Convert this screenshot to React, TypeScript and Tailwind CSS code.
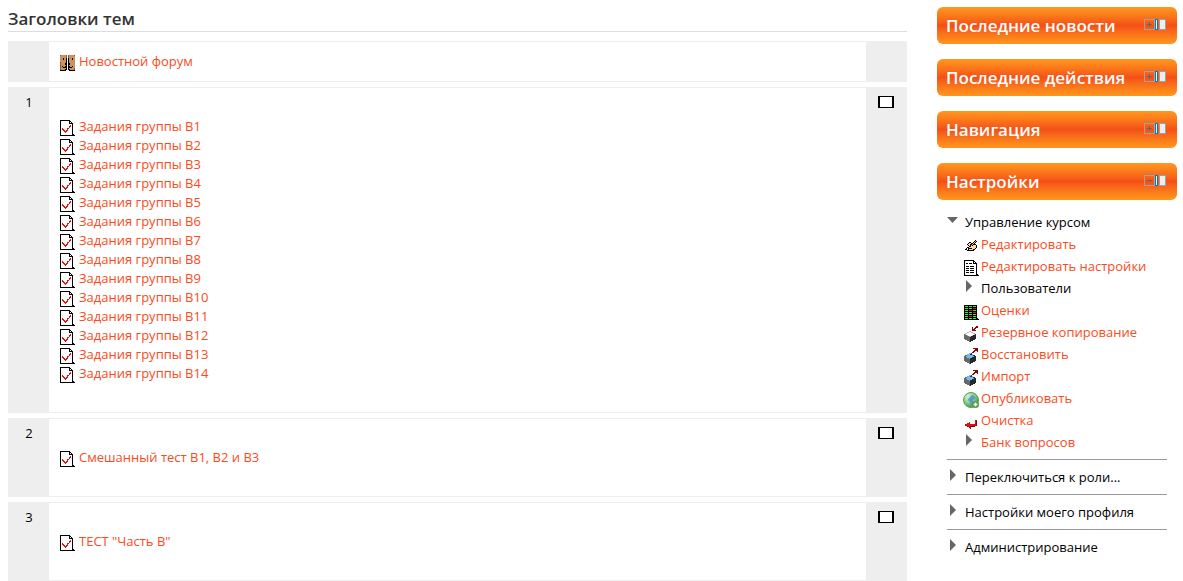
import { FC, ReactNode } from "react"

interface IPixelIcon {
    rows: string[]
}

interface ITreeItem {
    label: string
    icon?: ReactNode
    plain?: boolean
}

interface ITopic {
    num?: string
    items: string[]
}

const palette: Record<string, string> = {
    k: "#000000",
    w: "#ffffff",
    r: "#e01010",
    d: "#7a0a10",
    g: "#3fe04a",
    t: "#c8935c",
    s: "#8a5f38",
    p: "#ffd9a0",
    y: "#f0c020",
    a: "#686868",
    b: "#68c0f8",
    n: "#282828",
    e: "#b8b8b8",
}

const PixelIcon: FC<IPixelIcon> = ({ rows }) => {
    return (
        <svg className="block h-4 w-4 shrink-0" viewBox="0 0 16 16" shapeRendering="crispEdges" aria-hidden="true">
            {rows.map((row, y) =>
                row.split("").map((c, x) =>
                    palette[c] ? <rect key={`${x}-${y}`} x={x} y={y} width="1" height="1" fill={palette[c]} /> : null
                )
            )}
        </svg>
    )
}

const quiz = [
    "kkkkkkkkkk......",
    "kwwwwwwwwkk.....",
    "kwwwwwwwwkwk....",
    "kwwwwwwwwkkkk...",
    "kwwwwwwwwwwwk...",
    "kwwwwwwwwwrwk...",
    "kwwwwwwwwrrwk...",
    "kwwwwwwwwrwwk...",
    "kwrwwwwrrwwwk...",
    "kwrrwwwrwwwwk...",
    "kwwrrwrrwwwwk...",
    "kwwwrrrwwwwwk...",
    "kwwwwrwwwwwwk...",
    "kwwwwwwwwwwwk...",
    "kwwwwwwwwwwwkk..",
    "kkkkkkkkkkkkkkk.",
]

const forum = [
    "sttttts.sttttts.",
    "tttttts.stttttt.",
    "tttttts.stttttt.",
    "tttkttk.ktttktt.",
    "tttkttk.ktttktt.",
    "ttttttk.ktttttt.",
    "ttttttk.ktttttt.",
    "stttttk.ktttttt.",
    "sttttkk.kkttttt.",
    "sttttkk.kkttttt.",
    "stttttk.ktttttt.",
    "stkttkk.kkttktt.",
    "sttkkkk.kkkkttt.",
    "stttttk.kttttts.",
    "sttttkk.kktttts.",
    "kkkkkk...kkkkkk.",
]

const edit = [
    "................",
    "................",
    "............k...",
    "...........kyk..",
    "......kk..kyk...",
    ".....kppkkyk....",
    "....kppkkykkk...",
    ".....kpkykpppk..",
    "......kkpppppk..",
    "....kkpppppppk..",
    "...kwkkkkpppk...",
    "..kkwkppppkk....",
    "....kkkkkkk.....",
]

const report = [
    ".kkkkkkkkkk.....",
    ".kwwwwwwwwkk....",
    ".kwwwwwwwwkwk...",
    ".kwkkwkkkwkkkk..",
    ".kwwwwwwwwwwwk..",
    ".kwwwwwwwwwwwk..",
    ".kwkkkwkkkkwwk..",
    ".kwwwwwwwwwwwk..",
    ".kwkkkwkkkkwwk..",
    ".kwwwwwwwwwwwk..",
    ".kwkkkwkkkkwwk..",
    ".kwwwwwwwwwwwk..",
    ".kwkkkwkkkkwwk..",
    ".kwwwwwwwwwwwk..",
    ".kwwwwwwwwwwwkk.",
    ".kkkkkkkkkkkkkkk",
]

const grades = [
    "................",
    ".kkkkkkkkkkkkk..",
    ".kgggkgggkgggk..",
    ".kkkkkkkkkkkkk..",
    ".kgggkgggkrrrk..",
    ".kkkkkkkkkkkkk..",
    ".kgggkrrrkgggk..",
    ".kkkkkkkkkkkkk..",
    ".kgggkgggkrrrk..",
    ".kkkkkkkkkkkkk..",
    ".kgggkgggkgggk..",
    ".kkkkkkkkkkkkk..",
    ".kgggkrrrkgggk..",
    ".kkkkkkkkkkkkk..",
    ".kgggkgggkgggkk.",
    ".kkkkkkkkkkkkkkk",
]

const backup = [
    ".............dd.",
    ".........d..ddd.",
    ".........d.dd...",
    ".........ddd....",
    ".........dddd...",
    "......ee........",
    "....eewwee......",
    "..eewwwwwwee....",
    ".aewwwwwwwwen...",
    ".aaaewwwwennn...",
    ".aaaaaeennnnn...",
    ".aaaaaannnnnn...",
    ".aaaaaannnnnn...",
    "..aaaaannnnn....",
    "....aaannn......",
    "......an........",
]

const restore = [
    "..........ddddd.",
    "............ddd.",
    "...........dddd.",
    "..........dd..d.",
    ".........dd.....",
    "......bbd.......",
    "....bbbddb......",
    "..aabbbbbbnn....",
    ".aabbbbbbbbnn...",
    ".aaabbbbbnnnn...",
    ".aaaaabnnnnnn...",
    ".aaaaaannnnnn...",
    ".aaaaaannnnnn...",
    "..aaaaannnnn....",
    "....aaannn......",
    "......an........",
]

const reset = [
    "................",
    "................",
    "................",
    "................",
    "................",
    "................",
    "............rr..",
    "............rd..",
    "......r.....rd..",
    "....rrr.....rd..",
    "..rrrrrrrrrrrd..",
    "..drrrrrrrrrdd..",
    "....drrddddd....",
    "......dr........",
    ".......d........",
]

const GlobeIcon: FC = () => {
    return (
        <svg className="block h-4 w-4 shrink-0" viewBox="0 0 16 16" aria-hidden="true">
            <defs>
                <radialGradient id="globe" cx="0.35" cy="0.3" r="0.8">
                    <stop offset="0" stopColor="#e4f6e0" />
                    <stop offset="0.5" stopColor="#88cc80" />
                    <stop offset="1" stopColor="#3c8c3c" />
                </radialGradient>
            </defs>
            <circle cx="8" cy="8" r="7.5" fill="url(#globe)" stroke="#58a058" />
            <path d="M6 4 L10 3 L13 6 L10 8 L10 12 L7 14 L7 10 L5 8 Z" fill="#5a9cc8" />
            <path d="M2 5 L6 2 L8 4 L5 7 Z" fill="#c4e8bc" />
            <circle cx="12.5" cy="12.5" r="3.5" fill="#58983c" />
            <path d="M12.5 10.5 V14.5 M10.5 12.5 H14.5" stroke="#ffffff" strokeWidth="1.5" />
        </svg>
    )
}

const Marker: FC<{ open?: boolean }> = ({ open }) => {
    return (
        <svg className="mt-[3px] block h-4 w-4 shrink-0" viewBox="0 0 16 16" aria-hidden="true">
            <path d={open ? "M0 3 H11 L5.5 9 Z" : "M3 0 L9 6 L3 12 Z"} fill="#666666" />
        </svg>
    )
}

const topics: ITopic[] = [
    { num: "1", items: Array.from({ length: 14 }, (_, i) => `Задания группы B${i + 1}`) },
    { num: "2", items: ["Смешанный тест B1, B2 и B3"] },
    { num: "3", items: ['ТЕСТ "Часть B"'] },
]

// items without an icon are collapsed branches
const courseItems: ITreeItem[] = [
    { label: "Редактировать", icon: <PixelIcon rows={edit} /> },
    { label: "Редактировать настройки", icon: <PixelIcon rows={report} /> },
    { label: "Пользователи", plain: true },
    { label: "Оценки", icon: <PixelIcon rows={grades} /> },
    { label: "Резервное копирование", icon: <PixelIcon rows={backup} /> },
    { label: "Восстановить", icon: <PixelIcon rows={restore} /> },
    { label: "Импорт", icon: <PixelIcon rows={restore} /> },
    { label: "Опубликовать", icon: <GlobeIcon /> },
    { label: "Очистка", icon: <PixelIcon rows={reset} /> },
    { label: "Банк вопросов" },
]

const BlockHeader: FC<{ title: string; open?: boolean }> = ({ title, open }) => {
    return (
        <div className="flex h-[37px] items-center justify-between rounded-md bg-linear-to-b from-[#ff981d] via-[#f44f17] to-[#ff981d] pr-[11px] pl-[9px]">
            <h2 className="text-[17px] font-semibold whitespace-nowrap text-white">{title}</h2>
            <div className="flex gap-px pb-[3px]">
                <button type="button" aria-label={open ? "Свернуть" : "Развернуть"}>
                    <svg className="block" width="14" height="11" viewBox="0 0 14 11" shapeRendering="crispEdges">
                        <rect x="0.5" y="0.5" width="10" height="10" fill="none" stroke="#a8a09a" />
                        <path d={open ? "M3 5.5 H8" : "M3 5.5 H8 M5.5 3 V8"} stroke="#666666" />
                        <rect x="11" width="3" height="11" fill="#0078d7" />
                        <rect x="12" y="1" width="1" height="9" fill="#ffffff" />
                    </svg>
                </button>
                <button type="button" aria-label="Переместить на панель">
                    <svg className="block" width="7" height="11" viewBox="0 0 7 11" shapeRendering="crispEdges">
                        <rect width="7" height="11" fill="#a0a0a0" />
                        <rect x="1" y="1" width="5" height="9" fill="#eeeeee" />
                    </svg>
                </button>
            </div>
        </div>
    )
}

const Topic: FC<ITopic> = ({ num, items }) => {
    return (
        <li className="flex border-y border-[#eeeeee]">
            <div className="w-[41px] shrink-0 bg-[#eeeeee] pt-[5px] pl-px text-center">{num}</div>
            <ul className={num ? "grow px-[11px] py-[29px]" : "grow px-[11px] py-[10px]"}>
                {items.map((item) => (
                    <li key={item}>
                        <a href="#" className="inline-flex items-end gap-[3px] align-top text-[#fa4b1c]">
                            <PixelIcon rows={num ? quiz : forum} />
                            <span>{item}</span>
                        </a>
                    </li>
                ))}
            </ul>
            <div className="flex w-[41px] shrink-0 items-start bg-[#eeeeee] pt-2 pl-3">
                {num && <a href="#" aria-label={`Показать только тему ${num}`} className="h-3 w-4 border-x-2 border-y border-black bg-white"></a>}
            </div>
        </li>
    )
}

const App: FC = () => {
    return (
        <div className="flex gap-[30px] bg-white pr-[6px] pl-2 font-['Open_Sans','Noto_Sans',sans-serif] text-[13px] leading-[19px] text-black">
            <main className="grow">
                <h1 className="mb-[9px] border-b border-[#dddddd] pt-[7px] pb-px text-[17px] leading-[23px] font-semibold text-[#333333]">Заголовки тем</h1>
                <ul className="flex flex-col gap-[5px]">
                    <Topic items={["Новостной форум"]} />
                    {topics.map((topic) => (
                        <Topic key={topic.num} num={topic.num} items={topic.items} />
                    ))}
                </ul>
            </main>
            <aside className="flex w-[240px] shrink-0 flex-col gap-[15px] pt-[7px]">
                <BlockHeader title="Последние новости" />
                <BlockHeader title="Последние действия" />
                <BlockHeader title="Навигация" />
                <section>
                    <BlockHeader title="Настройки" open />
                    <nav className="px-[10px] pt-[11px] leading-[22px] whitespace-nowrap">
                        <button type="button" className="flex items-start gap-[2px]">
                            <Marker open />
                            <span>Управление курсом</span>
                        </button>
                        <ul className="pl-4">
                            {courseItems.map(({ label, icon, plain }) => (
                                <li key={label}>
                                    {plain ? (
                                        <button type="button" className="flex items-start gap-[2px]">
                                            <Marker />
                                            <span>{label}</span>
                                        </button>
                                    ) : (
                                        <a href="#" className="flex items-start gap-[2px] text-[#fa4b1c]">
                                            {icon ? <span className="pt-[5px]">{icon}</span> : <Marker />}
                                            <span>{label}</span>
                                        </a>
                                    )}
                                </li>
                            ))}
                        </ul>
                        {["Переключиться к роли...", "Настройки моего профиля", "Администрирование"].map((label) => (
                            <div key={label} className="mt-[6px] border-t border-[#999999] pt-[6px]">
                                <button type="button" className="flex items-start gap-[2px]">
                                    <Marker />
                                    <span>{label}</span>
                                </button>
                            </div>
                        ))}
                    </nav>
                </section>
            </aside>
        </div>
    )
}

export default App
